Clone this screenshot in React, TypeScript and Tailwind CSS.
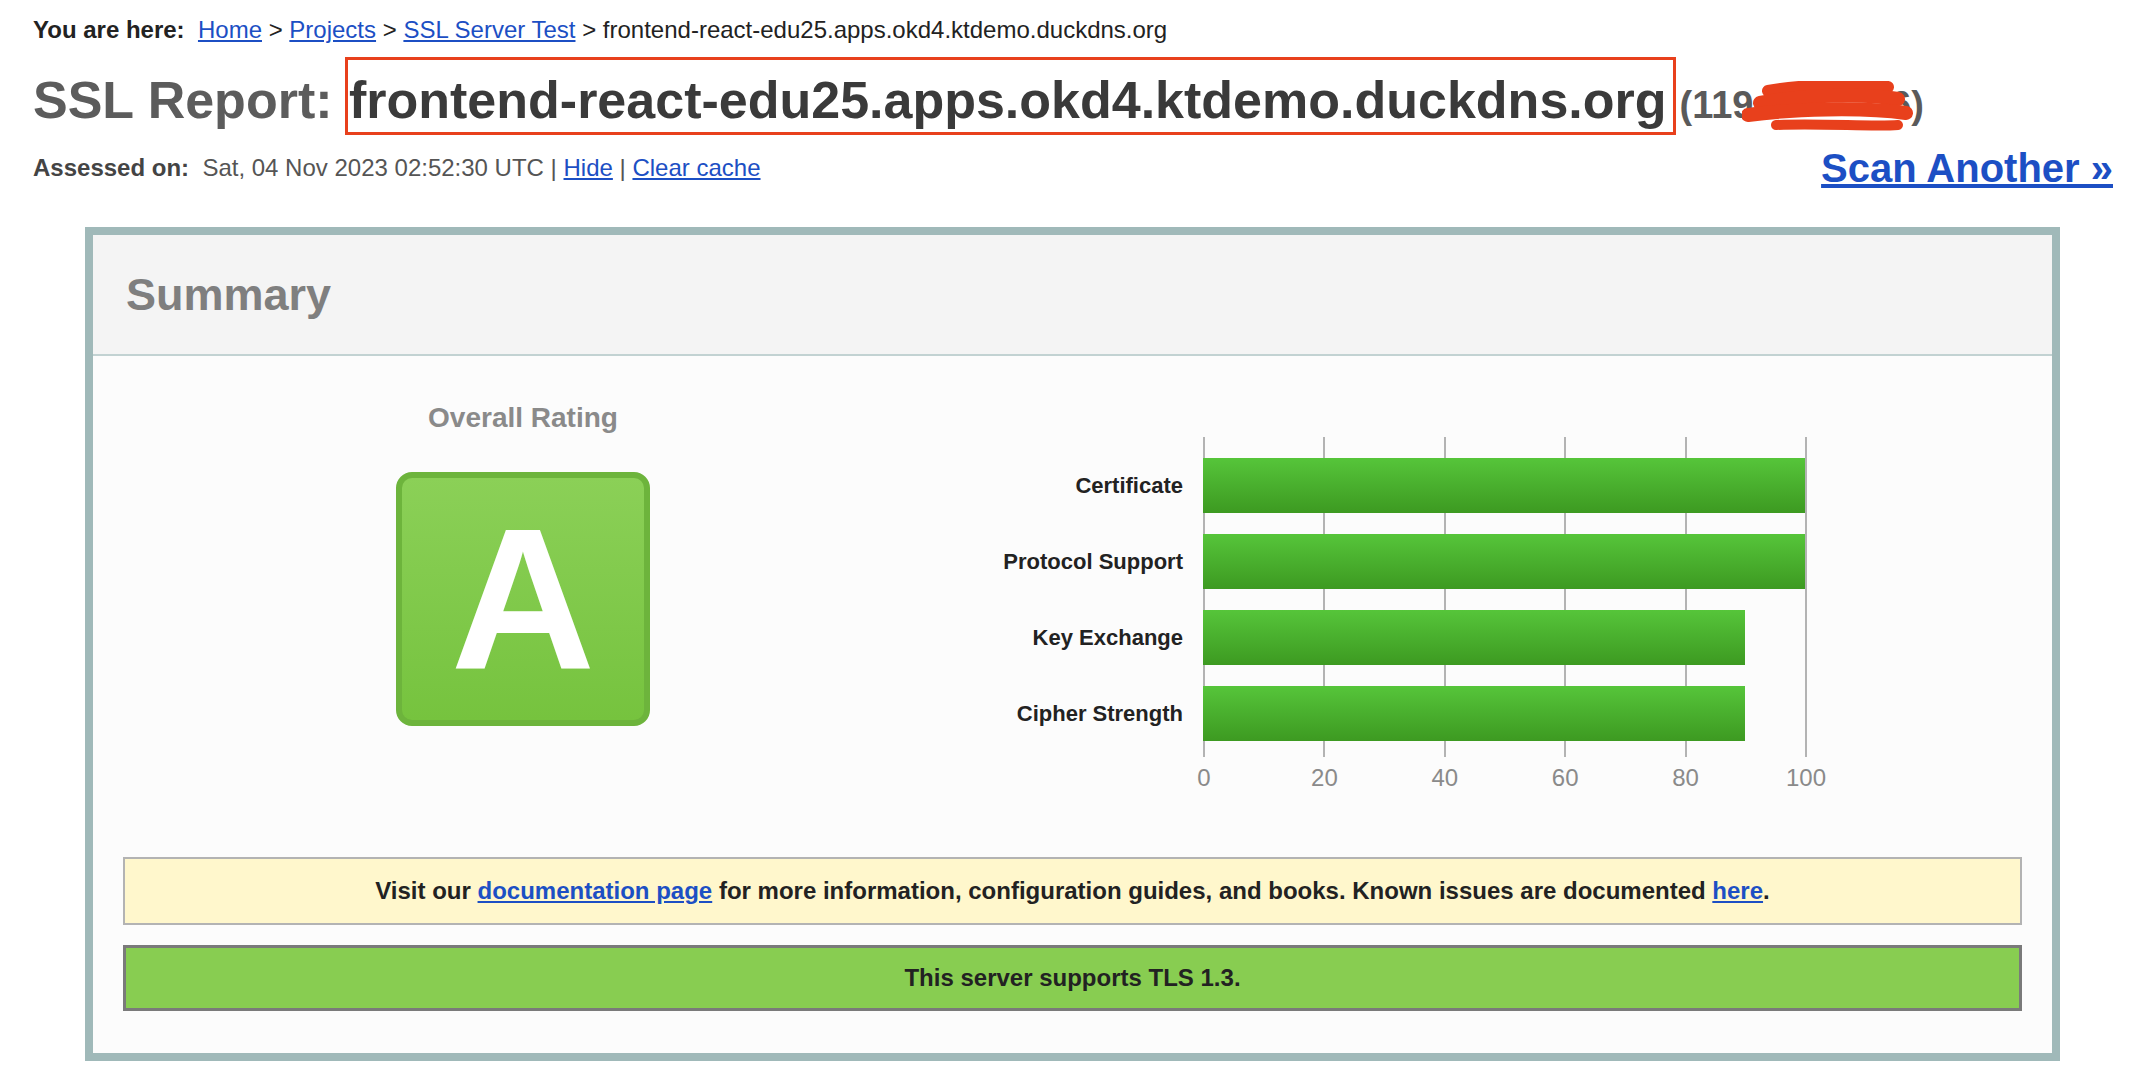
import React from "react";

const bars = [
  { label: "Certificate", value: 100 },
  { label: "Protocol Support", value: 100 },
  { label: "Key Exchange", value: 90 },
  { label: "Cipher Strength", value: 90 },
];

const ticks = [0, 20, 40, 60, 80, 100];

function Scribble() {
  return (
    <svg
      viewBox="0 0 175 54"
      className="pointer-events-none absolute left-[62px] top-[6px] h-[54px] w-[175px]"
    >
      <g stroke="#e8401c" strokeLinecap="round" strokeLinejoin="round" fill="none">
        <path d="M26 10 C60 4 110 2 146 6" strokeWidth="12" />
        <path d="M18 22 C60 14 120 12 156 18" strokeWidth="14" />
        <path d="M6 34 C50 28 120 26 164 32" strokeWidth="14" />
        <path d="M34 44 C80 42 130 46 156 44" strokeWidth="10" />
      </g>
    </svg>
  );
}

function RatingChart() {
  return (
    <div className="flex flex-col">
      <div className="relative">
        {/* grid lines */}
        <div className="absolute bottom-0 left-[250px] top-0 flex w-[604px]">
          {[0, 1, 2, 3, 4].map((i) => (
            <div
              key={i}
              className={
                i === 4
                  ? "flex-1 border-x-2 border-[#b3b3b3]"
                  : "flex-1 border-l-2 border-[#b3b3b3]"
              }
            />
          ))}
        </div>
        <div className="relative flex flex-col gap-[21px] pb-[16px] pt-[21px]">
          {bars.map((b) => (
            <div key={b.label} className="flex h-[55px] items-center">
              <div className="w-[230px] text-right text-[22px] font-bold text-[#222]">
                {b.label}
              </div>
              <div className="ml-[20px] h-full w-[604px]">
                <div
                  className="h-full bg-gradient-to-b from-[#56c53a] to-[#3d9a21]"
                  style={{ width: `${(b.value / 100) * 602}px` }}
                />
              </div>
            </div>
          ))}
        </div>
      </div>
      <div className="relative ml-[250px] mt-[9px] h-[24px] w-[604px] text-[24px] leading-[24px] text-[#8a8a8a]">
        {ticks.map((t, i) => (
          <span
            key={t}
            className="absolute top-0 -translate-x-1/2"
            style={{ left: `${i * 120.4 + 1}px` }}
          >
            {t}
          </span>
        ))}
      </div>
    </div>
  );
}

export default function App() {
  return (
    <div className="min-h-screen bg-white font-['Liberation_Sans',Arial,sans-serif] text-[#222]">
      <div className="pl-[33px] pr-[29px] pt-[16px]">
        <div className="h-[28px] text-[24px] leading-[28px] text-[#222]">
          <b>You are here:</b>&nbsp;{" "}
          <a href="#" className="text-[#1c4fc4] underline">Home</a> &gt;{" "}
          <a href="#" className="text-[#1c4fc4] underline">Projects</a> &gt;{" "}
          <a href="#" className="text-[#1c4fc4] underline">SSL Server Test</a> &gt;{" "}
          frontend-react-edu25.apps.okd4.ktdemo.duckdns.org
        </div>

        <h1 className="mt-[13px] flex items-baseline whitespace-nowrap text-[52px] font-bold leading-[60px]">
          <span className="text-[#5c5c5c]">SSL Report:&nbsp;</span>
          <span className="-ml-[2px] border-[3px] border-[#e8401c] pb-[2px] pl-[1px] pr-[6px] pt-[10px] text-[#3a3a3a]">
            frontend-react-edu25.apps.okd4.ktdemo.duckdns.org
          </span>
          <span className="relative ml-[4px] text-[38px] text-[#5a5a5a]">
            (119.<span className="inline-block w-[126px]" />6)
            <Scribble />
          </span>
        </h1>

        <div className="mt-[10px] flex items-center justify-between">
          <div className="text-[24px] leading-[28px] text-[#555]">
            <b className="text-[#444]">Assessed on:</b>&nbsp; Sat, 04 Nov 2023 02:52:30 UTC |{" "}
            <a href="#" className="text-[#1c4fc4] underline">Hide</a> |{" "}
            <a href="#" className="text-[#1c4fc4] underline">Clear cache</a>
          </div>
          <a href="#" className="text-[40px] font-bold leading-[46px] text-[#1c4fc4] underline">
            Scan Another &raquo;
          </a>
        </div>
      </div>

      <div className="ml-[85px] mr-[82px] mt-[36px] border-[8px] border-[#a0b9b9] bg-[#fcfcfc]">
        <div className="flex h-[121px] items-center border-b-2 border-[#c2d2d2] bg-[#f4f4f4] px-[33px]">
          <h2 className="text-[45px] font-bold text-[#7f7f7f]">Summary</h2>
        </div>

        <div className="flex">
          <div className="flex w-[860px] flex-col items-center pt-[46px]">
            <div className="text-[28px] font-bold leading-[32px] text-[#8a8a8a]">Overall Rating</div>
            <div className="mt-[38px] flex h-[254px] w-[254px] items-center justify-center rounded-[16px] border-[6px] border-[#6db43c] bg-gradient-to-b from-[#8bd057] to-[#76c33e]">
              <span className="text-[200px] font-bold leading-none text-white">A</span>
            </div>
          </div>
          <div className="pt-[81px]">
            <RatingChart />
          </div>
        </div>

        <div className="mx-[30px] mb-[42px] mt-[67px] flex flex-col gap-[20px]">
          <div className="flex h-[68px] items-center justify-center border-2 border-[#b3b3b3] bg-[#fff7cc] text-[24px] font-bold text-[#222]">
            <span>
              Visit our{" "}
              <a href="#" className="text-[#1c4fc4] underline">documentation page</a>{" "}
              for more information, configuration guides, and books. Known issues are documented{" "}
              <a href="#" className="text-[#1c4fc4] underline">here</a>.
            </span>
          </div>
          <div className="flex h-[66px] items-center justify-center border-[3px] border-[#7a7a7a] bg-[#88cd51] text-[24px] font-bold text-[#222]">
            This server supports TLS 1.3.
          </div>
        </div>
      </div>
    </div>
  );
}
